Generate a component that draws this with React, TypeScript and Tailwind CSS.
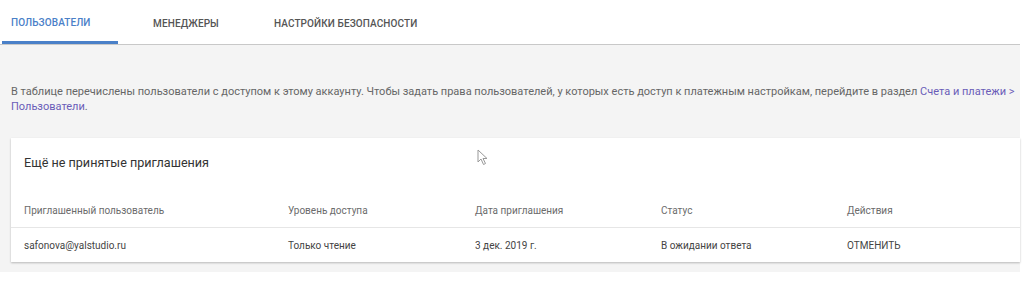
export default function App() {
  const cols = ["w-[264px]", "w-[187px]", "w-[186px]", "w-[186px]", "flex-1"]
  const head = ["Приглашенный пользователь", "Уровень доступа", "Дата приглашения", "Статус", "Действия"]
  const row = ["safonova@yalstudio.ru", "Только чтение", "3 дек. 2019 г.", "В ожидании ответа", "ОТМЕНИТЬ"]

  return (
    <div className="relative h-[290px] w-[1024px] bg-white font-['Roboto',sans-serif]">
      <div className="w-[1020px]">
        {/* tabs */}
        <div className="flex h-[45px] border-b border-[#c8c8c8] text-[10px] font-medium tracking-[0.1px]">
          <div className="flex w-[116px] ml-[2px] items-center border-b-[3px] border-[#4a80c8] pl-[9px] pt-[3px] text-[#4a80c8]">
            ПОЛЬЗОВАТЕЛИ
          </div>
          <div className="flex w-[136px] items-center justify-center pt-[3px] text-[#555]">МЕНЕДЖЕРЫ</div>
          <div className="flex items-center pl-[20px] pt-[3px] text-[#555]">НАСТРОЙКИ БЕЗОПАСНОСТИ</div>
        </div>

        {/* body */}
        <div className="bg-[#f4f4f4] pb-[10px]">
          <p className="pl-[11px] pr-[2px] pt-[39px] text-[11px] leading-[15px] text-[#666]">
            В таблице перечислены пользователи с доступом к этому аккаунту. Чтобы задать права пользователей, у
            которых есть доступ к платежным настройкам, перейдите в раздел{" "}
            <span className="text-[#6a5cb8]">Счета и платежи &gt; Пользователи</span>.
          </p>

          <div className="ml-[11px] mt-[24px] bg-white shadow-[0_1px_2px_rgba(0,0,0,0.25)]">
            <div className="px-[13px] pt-[16px] text-[12.6px] leading-[18px] text-[#333]">Ещё не принятые приглашения</div>
            <div className="mt-[22px] flex h-[34px] items-center border-b border-[#e6e6e6] px-[13px] text-[10px] text-[#6b6b6b]">
              {head.map((h, i) => (
                <div key={h} className={cols[i]}>
                  {h}
                </div>
              ))}
            </div>
            <div className="flex h-[34px] items-center px-[13px] text-[10px] text-[#444]">
              {row.map((c, i) => (
                <div key={c} className={cols[i]}>
                  {c}
                </div>
              ))}
            </div>
          </div>
        </div>
      </div>

      {/* cursor */}
      <svg className="absolute left-[477px] top-[149px]" width="12" height="17" viewBox="0 0 12 17">
        <path d="M1 1 L1 13 L4 10 L6.5 15.5 L8.5 14.5 L6 9.5 L10 9.5 Z" fill="#fff" stroke="#999" strokeWidth="1" />
      </svg>
    </div>
  )
}
